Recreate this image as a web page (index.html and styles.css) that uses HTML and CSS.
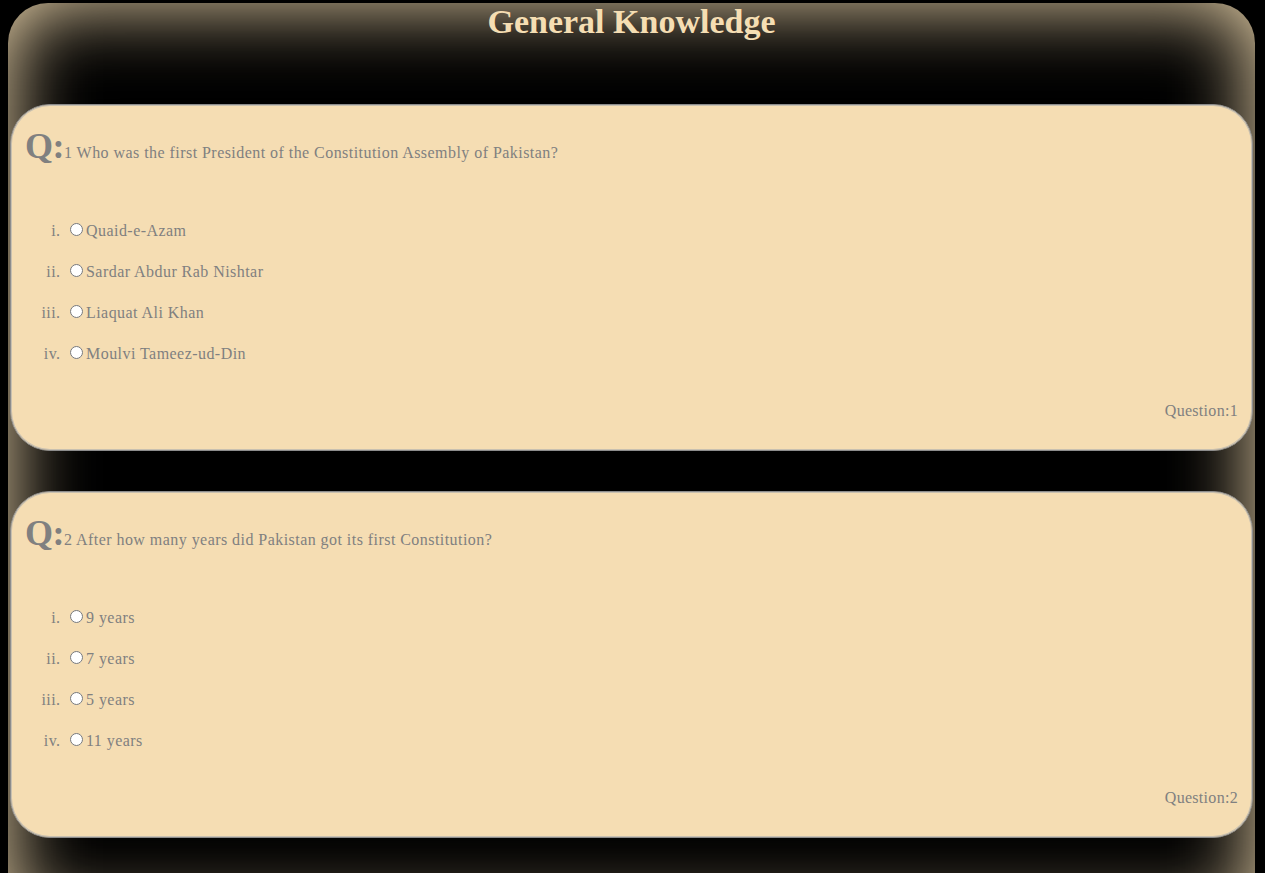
FILE: index.html
```html
<!DOCTYPE html>
<html>
<head>
<meta charset="utf-8">
<title>General Knowledge</title>
<link rel="stylesheet" href="styles.css">
</head>
<body>
<div class="quiz">
  <h1 class="title">General Knowledge</h1>
  <div class="card">
    <div class="qline"><span class="qmark">Q:</span>1 Who was the first President of the Constitution Assembly of Pakistan?</div>
    <ol class="options">
      <li><label><input type="radio" name="q1">Quaid-e-Azam</label></li>
      <li><label><input type="radio" name="q1">Sardar Abdur Rab Nishtar</label></li>
      <li><label><input type="radio" name="q1">Liaquat Ali Khan</label></li>
      <li><label><input type="radio" name="q1">Moulvi Tameez-ud-Din</label></li>
    </ol>
    <div class="qnum">Question:1</div>
  </div>
  <div class="card">
    <div class="qline"><span class="qmark">Q:</span>2 After how many years did Pakistan got its first Constitution?</div>
    <ol class="options">
      <li><label><input type="radio" name="q2">9 years</label></li>
      <li><label><input type="radio" name="q2">7 years</label></li>
      <li><label><input type="radio" name="q2">5 years</label></li>
      <li><label><input type="radio" name="q2">11 years</label></li>
    </ol>
    <div class="qnum">Question:2</div>
  </div>
</div>
</body>
</html>
```

FILE: styles.css
```css
html, body {
  background: #000;
}
body {
  margin: 0;
  padding: 3px 8px 0 8px;
  font-family: "Liberation Serif", "Times New Roman", serif;
  color: #808080;
}
.quiz {
  width: 1247px;
  background: #000;
  border-radius: 40px 40px 0 0;
  box-shadow: inset 0 0 80px #f5deb3;
  padding: 0 0 40px 0;
  min-height: 900px;
  box-sizing: border-box;
}
.title {
  margin: 0;
  text-align: center;
  font-size: 34px;
  line-height: 38px;
  font-weight: bold;
  color: #f5deb3;
  padding-top: 0;
  height: 101px;
}
.card {
  margin: 0 2px 40px 2px;
  background: #f5ddb3;
  border: 1px solid #8c8c8c;
  box-shadow: inset 0 0 0 1px #c8c0b0;
  border-radius: 40px;
  padding: 14px 14px 0 14px;
  height: 347px;
  box-sizing: border-box;
  letter-spacing: 0.45px;
}
.qline {
  font-size: 16px;
  line-height: 42px;
  margin-top: 6px;
}
.qmark {
  font-size: 36px;
  font-weight: bold;
  letter-spacing: -0.5px;
}
.options {
  list-style: lower-roman;
  margin: 46px 0 0 0;
  padding-left: 40px;
  font-size: 16px;
}
.options li {
  height: 41px;
  line-height: 18px;
}
.options input {
  margin: 3px 3px 0 5px;
}
.qnum {
  text-align: right;
  font-size: 16px;
  margin-top: 18px;
  letter-spacing: 0.3px;
}
```
